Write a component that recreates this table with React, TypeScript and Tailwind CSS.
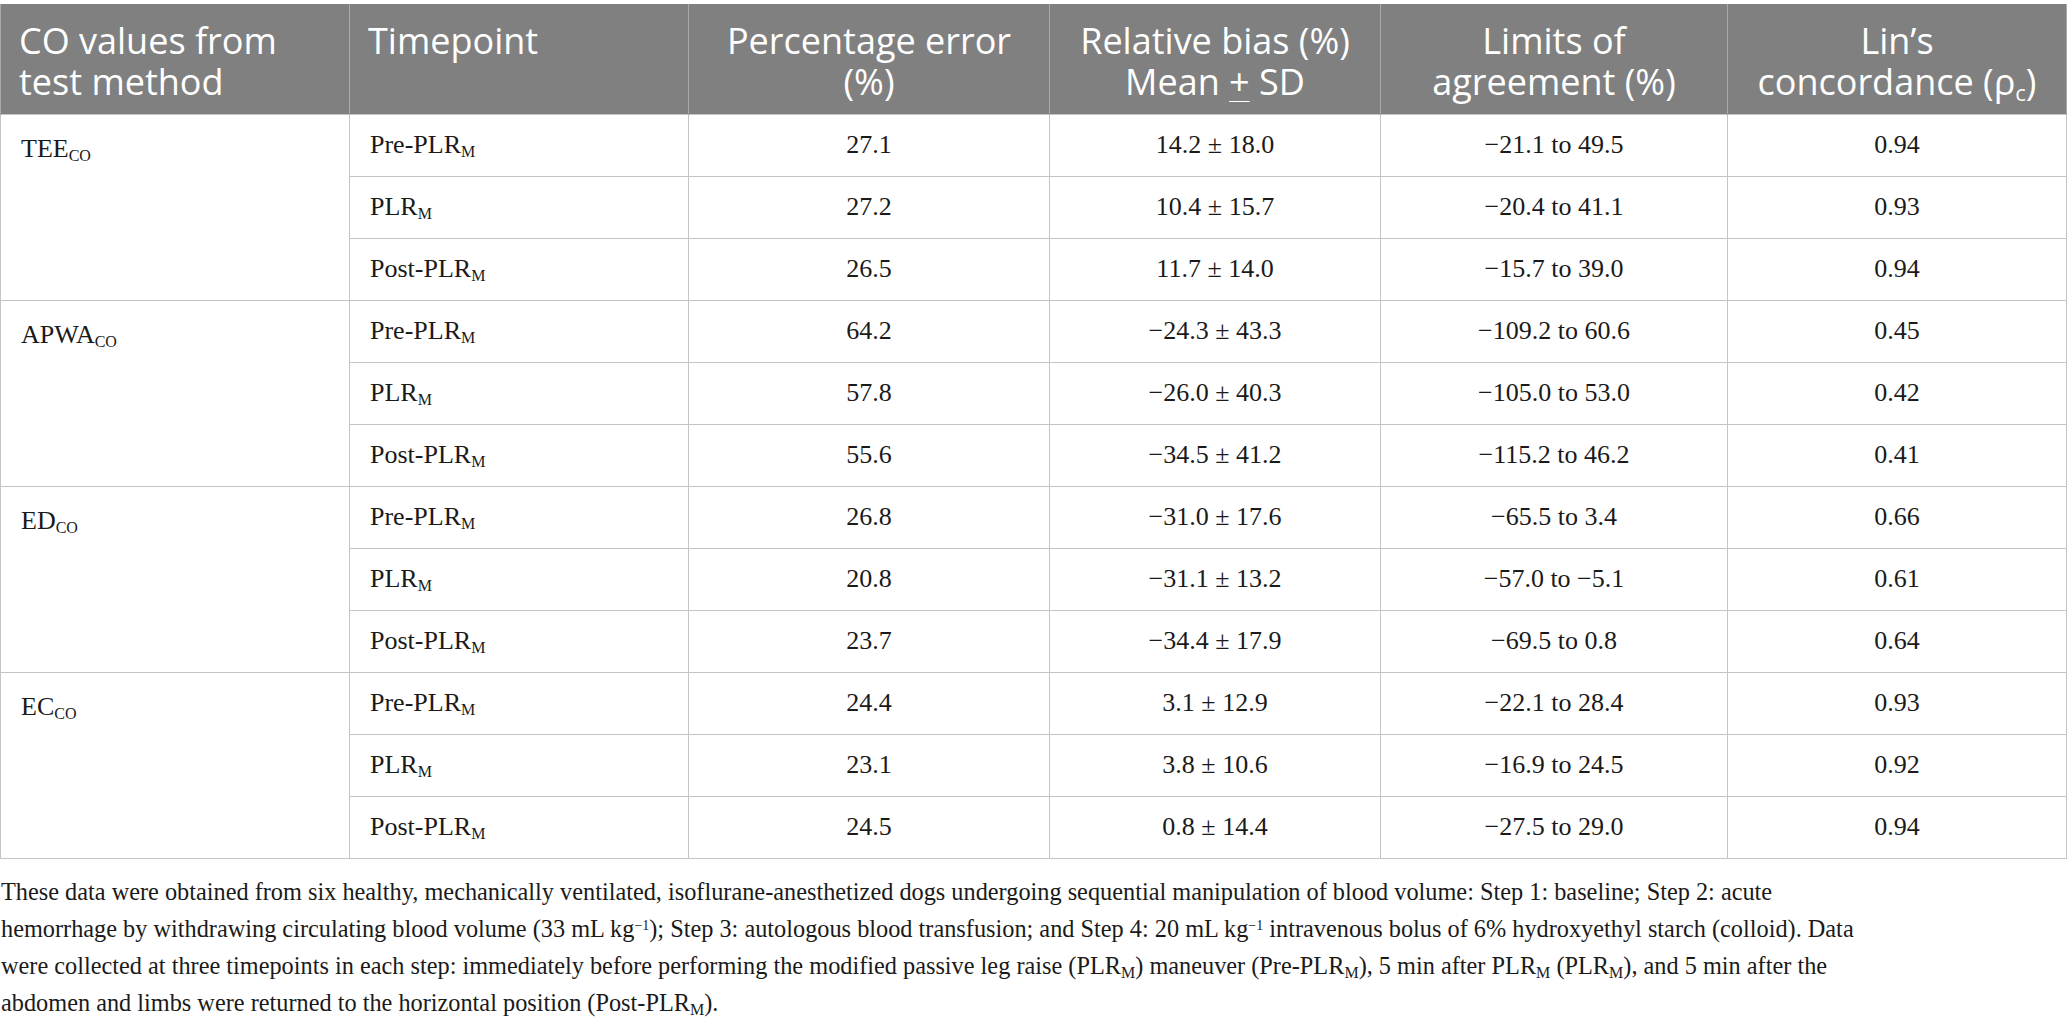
import React from 'react';

type Row = {
  time: 'Pre' | 'PLR' | 'Post';
  pct: string;
  bias: string;
  loa: string;
  lin: string;
};

type Group = { method: string; rows: Row[] };

const groups: Group[] = [
  {
    method: 'TEE',
    rows: [
      { time: 'Pre', pct: '27.1', bias: '14.2 ± 18.0', loa: '−21.1 to 49.5', lin: '0.94' },
      { time: 'PLR', pct: '27.2', bias: '10.4 ± 15.7', loa: '−20.4 to 41.1', lin: '0.93' },
      { time: 'Post', pct: '26.5', bias: '11.7 ± 14.0', loa: '−15.7 to 39.0', lin: '0.94' }
    ]
  },
  {
    method: 'APWA',
    rows: [
      { time: 'Pre', pct: '64.2', bias: '−24.3 ± 43.3', loa: '−109.2 to 60.6', lin: '0.45' },
      { time: 'PLR', pct: '57.8', bias: '−26.0 ± 40.3', loa: '−105.0 to 53.0', lin: '0.42' },
      { time: 'Post', pct: '55.6', bias: '−34.5 ± 41.2', loa: '−115.2 to 46.2', lin: '0.41' }
    ]
  },
  {
    method: 'ED',
    rows: [
      { time: 'Pre', pct: '26.8', bias: '−31.0 ± 17.6', loa: '−65.5 to 3.4', lin: '0.66' },
      { time: 'PLR', pct: '20.8', bias: '−31.1 ± 13.2', loa: '−57.0 to −5.1', lin: '0.61' },
      { time: 'Post', pct: '23.7', bias: '−34.4 ± 17.9', loa: '−69.5 to 0.8', lin: '0.64' }
    ]
  },
  {
    method: 'EC',
    rows: [
      { time: 'Pre', pct: '24.4', bias: '3.1 ± 12.9', loa: '−22.1 to 28.4', lin: '0.93' },
      { time: 'PLR', pct: '23.1', bias: '3.8 ± 10.6', loa: '−16.9 to 24.5', lin: '0.92' },
      { time: 'Post', pct: '24.5', bias: '0.8 ± 14.4', loa: '−27.5 to 29.0', lin: '0.94' }
    ]
  }
];

function Sub({ children }: { children: React.ReactNode }) {
  return <sub className="relative top-[4px] align-baseline text-[16px] leading-none">{children}</sub>;
}

function Plr({ prefix }: { prefix?: string }) {
  return (
    <span>
      {prefix}PLR<Sub>M</Sub>
    </span>
  );
}

function TimeLabel({ time }: { time: Row['time'] }) {
  if (time === 'Pre') return <Plr prefix="Pre-" />;
  if (time === 'Post') return <Plr prefix="Post-" />;
  return <Plr />;
}

const headCell =
  'border-x border-[#a9a9a9] px-[18px] pt-[16px] pb-[10px] align-top text-[36px] font-normal leading-[41px] text-white';
const bodyCell = 'h-[62px] border border-[#c4c4c4] px-[20px] text-[26px] leading-none text-[#1a1a1a]';

export default function App() {
  return (
    <div className="min-h-screen bg-white font-['Liberation_Serif',serif]">
      <table className="mt-[4px] w-[2066px] table-fixed border-collapse">
        <colgroup>
          <col className="w-[349px]" />
          <col className="w-[339px]" />
          <col className="w-[361px]" />
          <col className="w-[331px]" />
          <col className="w-[347px]" />
          <col className="w-[339px]" />
        </colgroup>
        <thead>
          <tr className="h-[110px] bg-[#808080] font-['Open_Sans',sans-serif]">
            <th className={`${headCell} text-left`}>
              CO values from
              <br />
              test method
            </th>
            <th className={`${headCell} text-left`}>Timepoint</th>
            <th className={`${headCell} text-center`}>
              Percentage error
              <br />
              (%)
            </th>
            <th className={`${headCell} text-center`}>
              Relative bias (%)
              <br />
              Mean <span className="underline decoration-1 underline-offset-[6px]">+</span> SD
            </th>
            <th className={`${headCell} text-center`}>
              Limits of
              <br />
              agreement (%)
            </th>
            <th className={`${headCell} text-center`}>
              Lin’s
              <br />
              concordance (ρ<sub className="text-[22px]">c</sub>)
            </th>
          </tr>
        </thead>
        <tbody>
          {groups.map((group) =>
            group.rows.map((row, i) => (
              <tr key={`${group.method}-${row.time}`}>
                {i === 0 ? (
                  <td rowSpan={3} className={`${bodyCell} pt-[21px] align-top text-left`}>
                    {group.method}
                    <Sub>CO</Sub>
                  </td>
                ) : null}
                <td className={`${bodyCell} text-left`}>
                  <TimeLabel time={row.time} />
                </td>
                <td className={`${bodyCell} text-center`}>{row.pct}</td>
                <td className={`${bodyCell} text-center`}>{row.bias}</td>
                <td className={`${bodyCell} text-center`}>{row.loa}</td>
                <td className={`${bodyCell} text-center`}>{row.lin}</td>
              </tr>
            ))
          )}
        </tbody>
      </table>
      <p className="mt-[14px] whitespace-nowrap pl-[1px] text-[24.3px] leading-[37px] text-[#1a1a1a]">
        These data were obtained from six healthy, mechanically ventilated, isoflurane-anesthetized dogs undergoing
        sequential manipulation of blood volume: Step 1: baseline; Step 2: acute
        <br />
        hemorrhage by withdrawing circulating blood volume (33 mL kg<sup className="text-[14px]">−1</sup>); Step 3:
        autologous blood transfusion; and Step 4: 20 mL kg<sup className="text-[14px]">−1</sup> intravenous bolus of 6%
        hydroxyethyl starch (colloid). Data
        <br />
        were collected at three timepoints in each step: immediately before performing the modified passive leg raise
        (PLR<Sub>M</Sub>) maneuver (Pre-PLR<Sub>M</Sub>), 5 min after PLR<Sub>M</Sub> (PLR<Sub>M</Sub>), and 5 min after
        the
        <br />
        abdomen and limbs were returned to the horizontal position (Post-PLR<Sub>M</Sub>).
      </p>
    </div>
  );
}
